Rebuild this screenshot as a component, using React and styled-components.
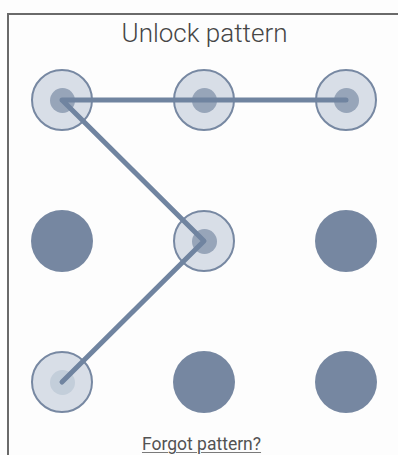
import React from 'react'
import styled, { createGlobalStyle } from 'styled-components'

const GlobalStyle = createGlobalStyle`
  html, body {
    margin: 0;
    padding: 0;
    background: #fdfdfd;
    font-family: Roboto, "Liberation Sans", sans-serif;
    overflow: hidden;
  }
`

const Frame = styled.div`
  margin: 13px 0 0 7px;
  height: 442px;
  border-left: 2px solid #6a6a6a;
  border-top: 2px solid #6a6a6a;
  box-sizing: border-box;
  display: flex;
  flex-direction: column;
  align-items: flex-start;
`

const Title = styled.h1`
  margin: 0;
  align-self: stretch;
  padding: 3px 0 0 2px;
  text-align: center;
  font-weight: 300;
  font-size: 26px;
  line-height: 30px;
  color: #464646;
`

const Pad = styled.div`
  position: relative;
  margin: 21px 0 0 22px;
  display: grid;
  grid-template-columns: repeat(3, 62px);
  grid-auto-rows: 62px;
  column-gap: 80px;
  row-gap: 79px;
`

const Node = styled.div`
  width: 62px;
  height: 62px;
  box-sizing: border-box;
  border-radius: 50%;
  display: flex;
  align-items: center;
  justify-content: center;
  background: ${p => (p.$active ? '#d8dee7' : '#7687a1')};
  border: ${p => (p.$active ? '2px solid #7788a2' : 'none')};
`

const Core = styled.div`
  width: 25px;
  height: 25px;
  border-radius: 50%;
  background: ${p => (p.$light ? '#c3ceda' : '#97a5b9')};
`

const Trail = styled.svg`
  position: absolute;
  left: 0;
  top: 0;
  width: 100%;
  height: 100%;
  pointer-events: none;
`

const Footer = styled.div`
  align-self: stretch;
  text-align: center;
  margin-top: 22px;
  padding-right: 4px;
  line-height: 18px;
`

const Forgot = styled.a`
  font-size: 17.5px;
  color: #535353;
  text-decoration: underline;
  text-decoration-color: #7a7a7a;
  text-decoration-thickness: 1px;
  text-underline-offset: 2px;
  cursor: pointer;
`

const nodes = [
  { active: true },
  { active: true },
  { active: true },
  { active: false },
  { active: true },
  { active: false },
  { active: true, light: true },
  { active: false },
  { active: false },
]

const cx = [31, 173, 315]
const cy = [31, 172, 313]
const path = [[0, 0], [2, 0], [0, 0], [1, 1], [0, 2]]

export default function App() {
  return (
    <>
      <GlobalStyle />
      <Frame>
        <Title>Unlock pattern</Title>
        <Pad>
          {nodes.map((n, i) => (
            <Node key={i} $active={n.active}>
              {n.active && <Core $light={n.light} />}
            </Node>
          ))}
          <Trail viewBox="0 0 346 344">
            <polyline
              points={path.map(([c, r]) => `${cx[c]},${cy[r]}`).join(' ')}
              fill="none"
              stroke="#7084a0"
              strokeWidth="5"
              strokeLinejoin="round"
              strokeLinecap="round"
            />
          </Trail>
        </Pad>
        <Footer>
          <Forgot>Forgot pattern?</Forgot>
        </Footer>
      </Frame>
    </>
  )
}
